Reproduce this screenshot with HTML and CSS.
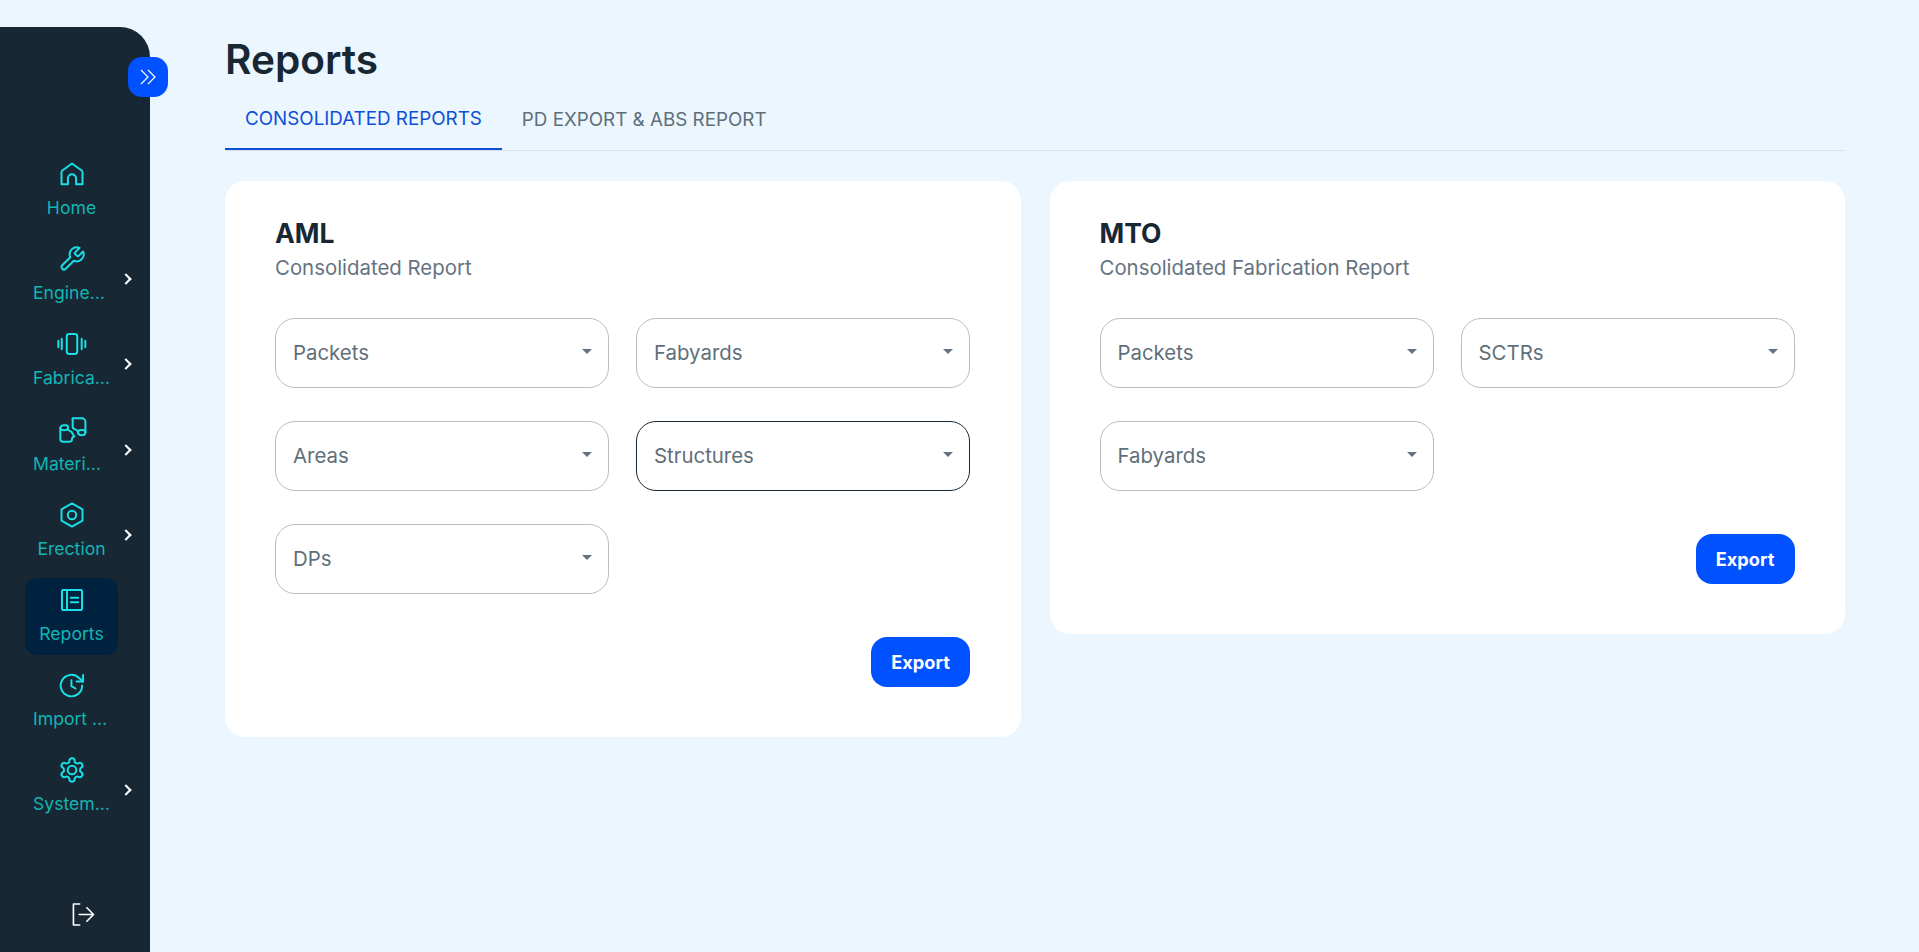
FILE: index.html
```html
<!DOCTYPE html>
<html lang="en">
<head>
<meta charset="utf-8">
<title>Reports</title>
<link rel="stylesheet" href="styles.css">
</head>
<body>
<div class="app">
  <aside class="sidebar">
    <button class="toggle" aria-label="Expand">
      <svg viewBox="0 0 24 24" class="toggle-icon"><path d="M5 5l7 7-7 7M12 5l7 7-7 7"/></svg>
    </button>
    <nav class="nav">
      <a class="nav-item">
        <svg viewBox="0 0 24 24" class="nav-icon"><path d="M3 20.700V10.500c0-.6.3-1.100.7-1.500L12 3l8.300 6c.4.4.7.9.7 1.500v10.200h-5.500v-5a3.500 3.500 0 0 0-7 0v5z"/></svg>
        <span class="nav-label">Home</span>
      </a>
      <a class="nav-item has-sub">
        <svg viewBox="0 0 24 24" class="nav-icon"><path d="M14.700 6.300a1 1 0 0 0 0 1.400l1.600 1.600a1 1 0 0 0 1.400 0l3.770-3.770a6 6 0 0 1-7.940 7.940l-6.910 6.910a2.120 2.120 0 0 1-3-3l6.910-6.910a6 6 0 0 1 7.940-7.940l-3.760 3.760z"/></svg>
        <span class="nav-label nav-label-cut">Engine…</span>
      </a>
      <a class="nav-item has-sub">
        <svg viewBox="0 0 24 24" class="nav-icon"><rect x="7.500" y="3.500" width="9" height="17" rx="2"/><path d="M3.200 7.500v9M.3 9.300v5.500M20.300 7.500v9M23.400 9.300v5.500"/></svg>
        <span class="nav-label nav-label-cut">Fabrica…</span>
      </a>
      <a class="nav-item has-sub">
        <svg viewBox="0 0 24 24" class="nav-icon"><path d="M2 10.500C2 9 3.300 8 5 8h2c1 0 1.500.8 1.500 2v1.500c.5 1.200 2 1.500 3 2l2.500 4c-1.200.2-2 1.200-2 2.500 0 1-.8 2-2 2H4a2 2 0 0 1-2-2z"/><path d="M2 10.500c0 1 1.300 1.700 3 1.700s3.500-.7 3.500-1.700"/><path d="M12.500 2h8a3 3 0 0 1 3 3v9c0 1.500-1.400 2.500-3.200 2.500s-3.200-1-3.200-2.500c0-1-1-2-2.500-2.500-1-.3-2-1-2-2V3.500a1.500 1.500 0 0 1 -.1-1.500z"/><path d="M17.100 14c0-1.200 1.400-2 3.200-2s3.200.8 3.200 2"/></svg>
        <span class="nav-label nav-label-cut">Materi…</span>
      </a>
      <a class="nav-item has-sub">
        <svg viewBox="0 0 24 24" class="nav-icon"><path d="M12 2.100l9 5v9.800l-9 5-9-5V7.100z"/><circle cx="12" cy="12" r="3.600"/></svg>
        <span class="nav-label">Erection</span>
      </a>
      <a class="nav-item active">
        <svg viewBox="0 0 24 24" class="nav-icon"><rect x="3.400" y="3.400" width="17.200" height="17.200" rx=".8"/><path d="M7.700 3.400v17.200M11 10h6.300M11 14h6.300"/></svg>
        <span class="nav-label">Reports</span>
      </a>
      <a class="nav-item">
        <svg viewBox="0 0 24 24" class="nav-icon"><path d="M20.700 12.500a9.200 9.200 0 1 1-2.700-6.500L21.500 9"/><path d="M21.500 3.500V9H16M11.500 8v5l3.500 2"/></svg>
        <span class="nav-label nav-label-cut">Import …</span>
      </a>
      <a class="nav-item has-sub">
        <svg viewBox="0 0 24 24" class="nav-icon"><path d="M12.220 2h-.44a2 2 0 0 0-2 2v.18a2 2 0 0 1-1 1.730l-.43.25a2 2 0 0 1-2 0l-.15-.08a2 2 0 0 0-2.730.73l-.22.38a2 2 0 0 0 .73 2.730l.15.1a2 2 0 0 1 1 1.720v.51a2 2 0 0 1-1 1.740l-.15.09a2 2 0 0 0-.73 2.730l.22.38a2 2 0 0 0 2.730.73l.15-.08a2 2 0 0 1 2 0l.43.25a2 2 0 0 1 1 1.730V20a2 2 0 0 0 2 2h.44a2 2 0 0 0 2-2v-.18a2 2 0 0 1 1-1.730l.43-.25a2 2 0 0 1 2 0l.15.08a2 2 0 0 0 2.730-.73l.22-.39a2 2 0 0 0-.73-2.730l-.15-.08a2 2 0 0 1-1-1.740v-.5a2 2 0 0 1 1-1.740l.15-.09a2 2 0 0 0 .73-2.730l-.22-.38a2 2 0 0 0-2.730-.73l-.15.08a2 2 0 0 1-2 0l-.43-.25a2 2 0 0 1-1-1.730V4a2 2 0 0 0-2-2z"/><circle cx="12" cy="12" r="3.700"/></svg>
        <span class="nav-label nav-label-cut">System…</span>
      </a>
    </nav>
    <button class="logout" aria-label="Log out">
      <svg viewBox="0 0 24 24" class="logout-icon"><path d="M8 1H1.500v22H8M7.500 12h15M15.500 5l7 7-7 7"/></svg>
    </button>
  </aside>

  <main class="main">
    <h1 class="title">Reports</h1>
    <div class="tabs">
      <button class="tab tab-active">CONSOLIDATED REPORTS</button>
      <button class="tab">PD EXPORT &amp; ABS REPORT</button>
    </div>
    <div class="cards">
      <section class="card">
        <h2 class="card-title">AML</h2>
        <p class="card-sub">Consolidated Report</p>
        <div class="fields">
          <div class="select"><span>Packets</span><i class="caret"></i></div>
          <div class="select"><span>Fabyards</span><i class="caret"></i></div>
          <div class="select"><span>Areas</span><i class="caret"></i></div>
          <div class="select select-focus"><span>Structures</span><i class="caret"></i></div>
          <div class="select"><span>DPs</span><i class="caret"></i></div>
        </div>
        <div class="actions"><button class="export">Export</button></div>
      </section>
      <section class="card">
        <h2 class="card-title">MTO</h2>
        <p class="card-sub">Consolidated Fabrication Report</p>
        <div class="fields">
          <div class="select"><span>Packets</span><i class="caret"></i></div>
          <div class="select"><span>SCTRs</span><i class="caret"></i></div>
          <div class="select"><span>Fabyards</span><i class="caret"></i></div>
        </div>
        <div class="actions"><button class="export">Export</button></div>
      </section>
    </div>
  </main>
</div>
</body>
</html>
```
FILE: styles.css
```css
* { box-sizing: border-box; }
html, body { margin: 0; height: 100%; }
body {
  background: #ebf6ff;
  font-family: Inter, "Liberation Sans", sans-serif;
  overflow: hidden;
}
.app { display: flex; height: 952px; }

.sidebar {
  position: relative;
  flex: 0 0 150px;
  margin-top: 27px;
  background: #172733;
  border-top-right-radius: 30px;
  display: flex;
  flex-direction: column;
}
.toggle {
  position: absolute;
  top: 30px;
  left: 128px;
  width: 40px;
  height: 40px;
  border: 0;
  padding: 0;
  border-radius: 14px;
  background: #0051ff;
  display: flex;
  align-items: center;
  justify-content: center;
}
.toggle-icon { width: 24px; height: 24px; fill: none; stroke: #fff; stroke-width: 1.2; }

.nav {
  margin: 125px 0 0 25px;
  display: flex;
  flex-direction: column;
  gap: 8.2px;
  align-items: flex-start;
}
.nav-item {
  position: relative;
  width: 93px;
  height: 77px;
  padding-top: 8px;
  border-radius: 12px;
  display: flex;
  flex-direction: column;
  align-items: center;
}
.nav-item.active { background: #01223f; }
.nav-icon {
  width: 28px;
  height: 28px;
  flex: none;
  overflow: visible;
  fill: none;
  stroke: #1adfe6;
  stroke-width: 1.7;
  stroke-linejoin: round;
  stroke-linecap: round;
}
.nav-label {
  margin-top: 8px;
  font-size: 17.6px;
  line-height: 24px;
  color: #13b5b5;
  white-space: nowrap;
}
.nav-label-cut { width: 77px; text-align: left; }
.has-sub::after {
  content: "";
  position: absolute;
  left: 97px;
  top: 38px;
  width: 6px;
  height: 6px;
  border-top: 2px solid #fff;
  border-right: 2px solid #fff;
  transform: rotate(45deg);
}
.logout {
  margin: auto 0 26px 72px;
  background: none;
  border: 0;
  padding: 0;
  width: 23px;
  height: 23px;
}
.logout-icon { width: 23px; height: 23px; fill: none; stroke: #fff; stroke-width: 1.7; stroke-linecap: round; stroke-linejoin: round; display: block; }

.main { flex: 1; padding: 32px 74px 0 75px; min-width: 0; }
.title { margin: 0; font-size: 40.6px; line-height: 56px; font-weight: 600; color: #172733; }
.tabs { display: flex; margin-top: 1px; height: 62px; border-bottom: 1px solid #d5e0ea; }
.tab {
  height: 61px;
  padding: 0 20px;
  border: 0;
  background: none;
  font-family: Inter, "Liberation Sans", sans-serif;
  font-size: 18.8px;
  color: #5f6f7a;
  white-space: nowrap;
}
.tab-active { color: #0f4fd8; border-bottom: 2px solid #0f4fd8; }

.cards { display: flex; gap: 29px; align-items: flex-start; margin-top: 30px; }
.card {
  flex: 1;
  background: #fff;
  border-radius: 20px;
  padding: 34px 50.5px 50px 50px;
}
.card-title { margin: 0; font-size: 26.5px; line-height: 36px; font-weight: 700; color: #172733; }
.card-sub { margin: 2px 0 0; font-size: 20.4px; line-height: 30px; color: #66737f; }
.fields { display: grid; grid-template-columns: 1fr 1fr; gap: 33px 27px; margin-top: 35px; }
.select {
  height: 70px;
  padding: 0 17px 2px;
  border: 1px solid #bdbdbd;
  border-radius: 20px;
  display: flex;
  align-items: center;
  justify-content: space-between;
  font-size: 20.4px;
  color: #5f6f7a;
}
.select-focus { border-color: #172733; }
.caret {
  width: 0;
  height: 0;
  margin: -2px -1px 0 0;
  border-left: 5px solid transparent;
  border-right: 5px solid transparent;
  border-top: 5px solid #66737f;
}
.actions { display: flex; justify-content: flex-end; margin-top: 43px; }
.export {
  width: 99px;
  height: 50px;
  border: 0;
  border-radius: 16px;
  background: #0051ff;
  color: #fff;
  font-family: Inter, "Liberation Sans", sans-serif;
  font-weight: 700;
  font-size: 18.2px;
}
```
